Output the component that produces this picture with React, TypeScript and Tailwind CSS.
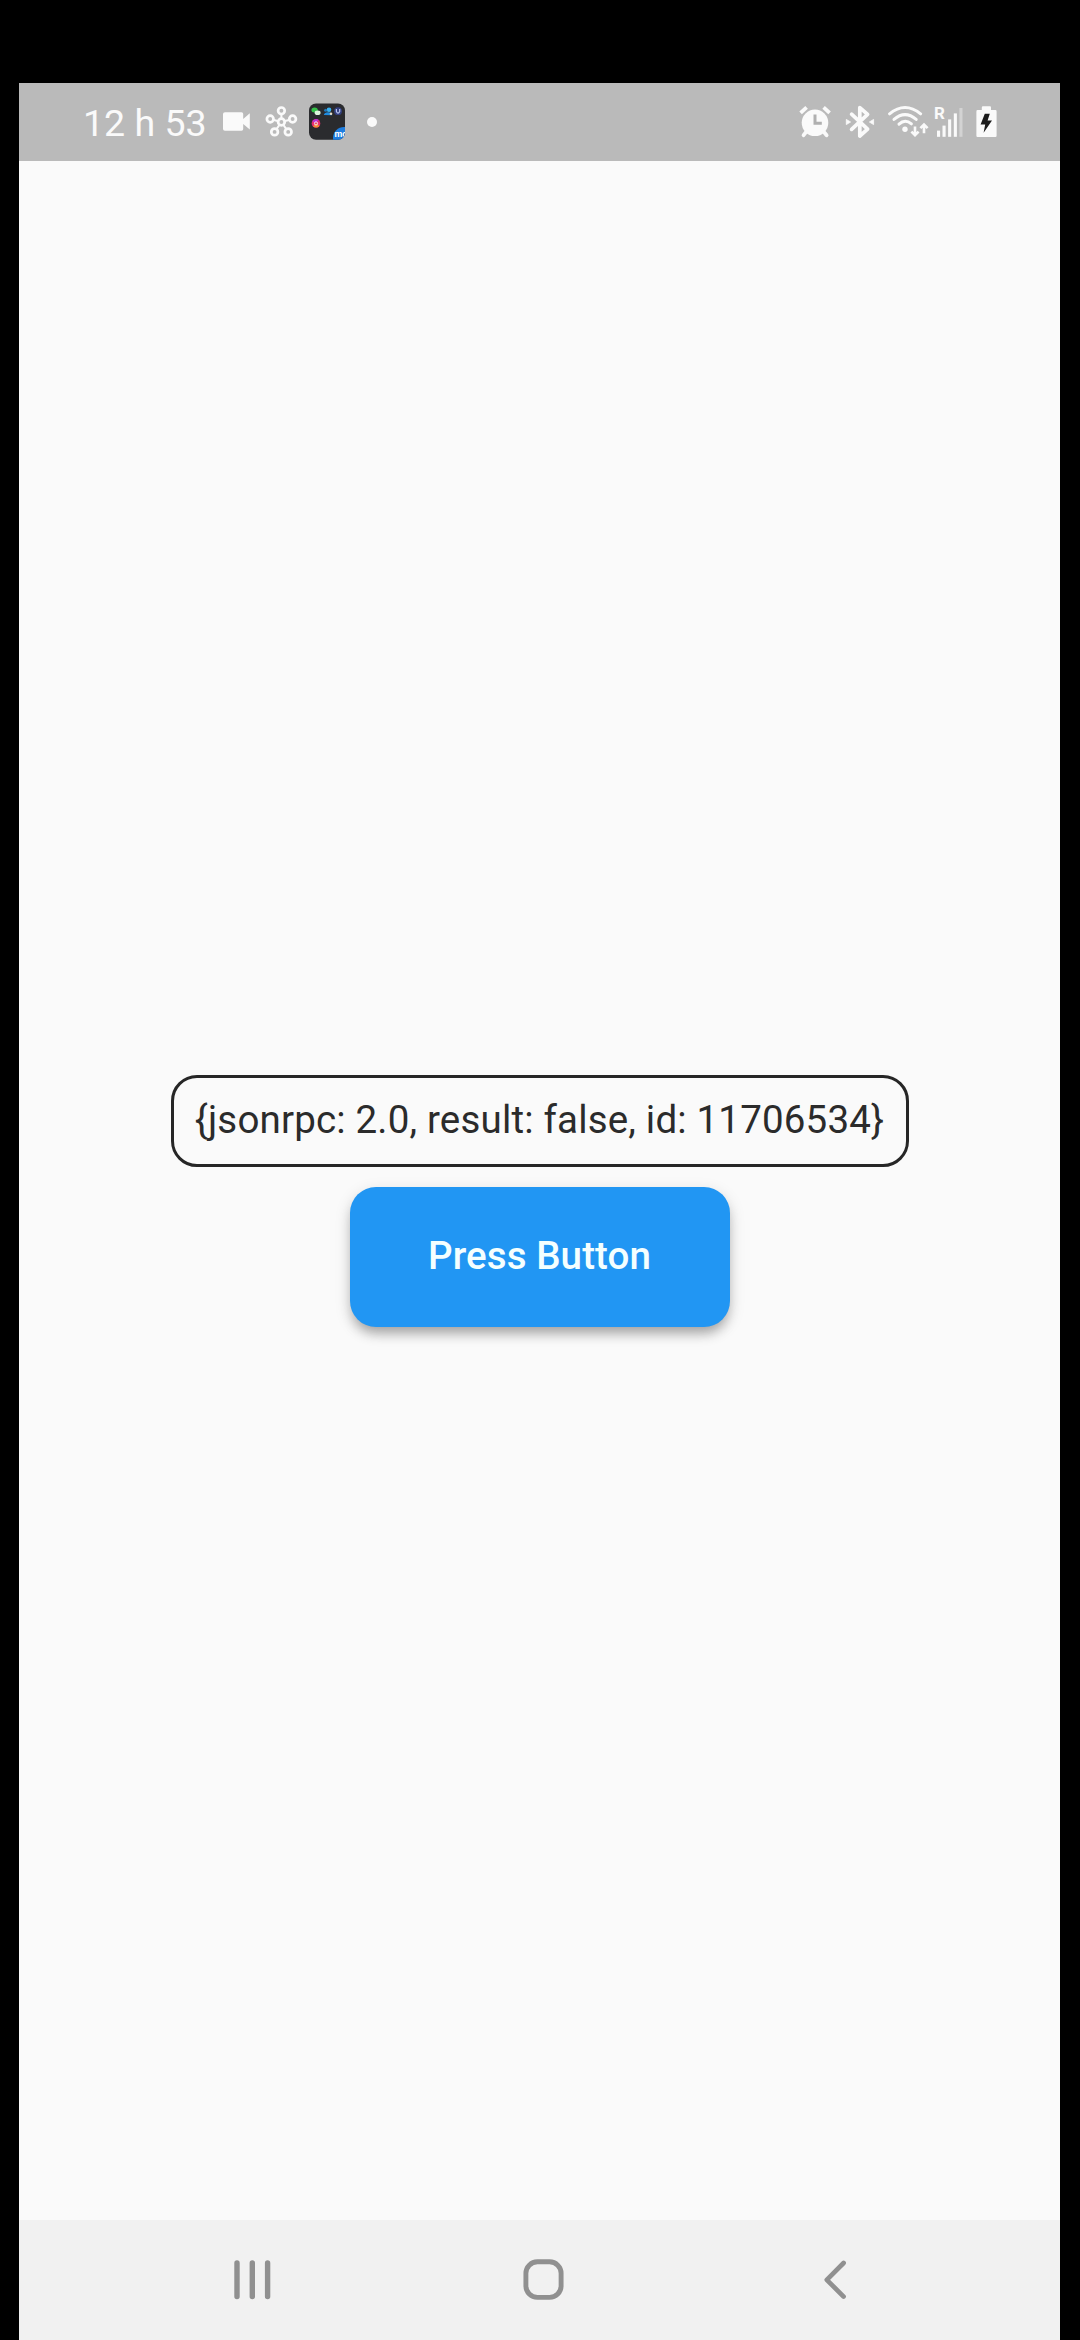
import React from "react";

type GlyphProps = {
  x: number;
  y: number;
  w: number;
  h: number;
  className?: string;
  children: React.ReactNode;
};

function Glyph({ x, y, w, h, className, children }: GlyphProps) {
  return (
    <svg width={w} height={h} viewBox={`${x} ${y} ${w} ${h}`} fill="none" className={className} aria-hidden="true">
      {children}
    </svg>
  );
}

const INK = "#fafafa";
const NAV = "#909090";

const hubNodes = [
  [282.4, 110.8],
  [293.6, 119],
  [289.2, 131.9],
  [275.6, 131.9],
  [271.2, 119],
];

function StatusLeft() {
  return (
    <div className="flex items-center">
      <Glyph x={223} y={103} w={29} h={38} className="ml-[18px]">
        <path d="M226 112.2H242.5Q244.2 112.2 244.2 114V119L250.8 113.3V129.6L244.2 124V129Q244.2 130.8 242.5 130.8H226Q224 130.8 224 129V114Q224 112.2 226 112.2Z" fill={INK} />
      </Glyph>
      <Glyph x={266} y={103} w={34} h={38} className="ml-[14px]">
        <g stroke={INK} strokeWidth="2.7">
          {hubNodes.map(([x, y]) => (
            <path key={`l${x}`} d={`M282.4 122L${x} ${y}`} strokeWidth="2" />
          ))}
          {hubNodes.map(([x, y]) => (
            <circle key={`c${x}`} cx={x} cy={y} r="3.3" fill="#bababa" />
          ))}
          <circle cx="282.4" cy="122" r="3.3" fill="#bababa" />
        </g>
      </Glyph>
      <Glyph x={309} y={102} w={38} h={40} className="ml-[9px]">
        <defs>
          <clipPath id="tile">
            <rect x="310" y="103.4" width="36" height="36.3" rx="7" />
          </clipPath>
        </defs>
        <g clipPath="url(#tile)">
          <rect x="310" y="103" width="36" height="37" fill="#2a2b2e" />
          <ellipse cx="315.6" cy="110" rx="3.2" ry="2.5" fill="#35c24a" />
          <ellipse cx="318.6" cy="112.8" rx="3" ry="2.3" fill="#dcf5dc" />
          <circle cx="330" cy="109.8" r="2.3" fill="#37b0f0" />
          <circle cx="326.6" cy="110.2" r="1.5" fill="#2378b8" />
          <path d="M324.8 115Q325.5 112.2 329 112.2Q333 112.2 333.2 115.2Z" fill="#1e8be0" />
          <circle cx="332" cy="113.8" r="1.3" fill="#eadfc8" />
          <circle cx="339" cy="111.2" r="3.9" fill="#34407f" />
          <path d="M337.4 109V111.4Q339 114.8 340.7 111.4V109" stroke="#b8c4f0" strokeWidth="1.2" />
          <circle cx="317" cy="123.4" r="4.3" fill="#e62b70" />
          <path d="M314 126.2A4.3 4.3 0 0 0 320.5 126L317 123Z" fill="#f58b35" />
          <path d="M313.4 121.4A4.3 4.3 0 0 1 319.5 119.8L317 123Z" fill="#b832d6" />
          <circle cx="317" cy="123.4" r="1.6" stroke="#fbe3ee" strokeWidth="1" />
          <circle cx="345" cy="138" r="11" fill="#1d7de0" />
          <text x="335.4" y="137" fontFamily="Roboto, sans-serif" fontSize="9" fontWeight="700" fill="#fff">
            mc
          </text>
        </g>
      </Glyph>
      <span className="ml-[21px] size-[10px] rounded-full bg-[#fafafa]" />
    </div>
  );
}

function StatusRight() {
  return (
    <div className="flex items-center">
      <Glyph x={798} y={103} w={34} h={38}>
        <circle cx="815" cy="122.8" r="13.3" fill={INK} />
        <path d="M815 114.5V123.3H821.8" stroke="#b0b0b0" strokeWidth="3" />
        <path d="M800.6 112.8L806.6 107.4M829.6 112.8L823.6 107.4" stroke={INK} strokeWidth="3.8" />
        <path d="M806.5 131.5L803.6 135.2M823.5 131.5L826.6 135.2" stroke={INK} strokeWidth="3.8" strokeLinecap="round" />
      </Glyph>
      <Glyph x={844} y={103} w={32} h={38} className="ml-[12px]">
        <path d="M851.6 114.2L867.6 129.2L859.8 136V107.6L867.6 114.4L851.6 129.4" stroke={INK} strokeWidth="3.7" strokeLinejoin="round" strokeLinecap="round" />
        <path d="M846.3 119.4L850.6 122L846.3 124.6ZM873.6 119.4L869.4 122L873.6 124.6Z" fill={INK} stroke={INK} strokeWidth="0.8" strokeLinejoin="round" />
      </Glyph>
      <Glyph x={886} y={103} w={44} h={38} className="ml-[10px]">
        <g stroke={INK} strokeWidth="3" strokeLinecap="round">
          <path d="M889.6 113.8Q905 101.2 920.6 113.8" />
          <path d="M894 119.4Q905 109.8 916.2 119.4" />
          <path d="M899 124.2Q905 118.4 911.4 123.8" />
        </g>
        <circle cx="905" cy="129.2" r="2.7" fill={INK} />
        <g stroke={INK} strokeWidth="2.6">
          <path d="M915 126.6V135M911.4 131.6L915 135.2L918.6 131.6" />
          <path d="M924 133.2V124.8M920.4 128.2L924 124.6L927.6 128.2" />
        </g>
      </Glyph>
      <Glyph x={933} y={103} w={32} h={38} className="ml-[3px]">
        <text x="933.9" y="119" fontFamily="Roboto, sans-serif" fontSize="17" fontWeight="700" fill={INK}>
          R
        </text>
        <g fill={INK}>
          <rect x="937" y="130.6" width="3.1" height="6.2" />
          <rect x="942.5" y="125.6" width="3.1" height="11.2" />
          <rect x="948.1" y="119.4" width="3.1" height="17.4" />
          <rect x="953.8" y="113.4" width="3.1" height="23.4" />
          <rect x="959.4" y="108" width="3.1" height="28.8" opacity="0.4" />
        </g>
      </Glyph>
      <Glyph x={975} y={103} w={23} h={38} className="ml-[10px]">
        <path d="M981.8 110V107.4Q981.8 106.2 983 106.2H990Q991 106.2 991 107.4V110H995.4Q996.6 110 996.6 111.4V135.8Q996.6 137.1 995.4 137.1H977.6Q976.4 137.1 976.4 135.8V111.4Q976.4 110 977.6 110Z" fill={INK} />
        <path d="M984.8 113.8H989.8L987.6 120.6H992L983.6 132.8L985.2 124.4H980.6Z" fill="#1c1c1c" />
      </Glyph>
    </div>
  );
}

export default function App() {
  return (
    <div className="flex h-[2340px] w-[1080px] flex-col overflow-hidden bg-black pt-[83px] pr-5 pl-[19px] font-['Roboto',sans-serif]">
      <header className="flex h-[78px] shrink-0 items-center justify-between bg-[#bababa] pr-[62px] pl-[64px]">
        <div className="flex items-center">
          <span className="w-[121px] pt-[3px] text-[37.5px] leading-none whitespace-nowrap text-[#fafafa]">12 h 53</span>
          <StatusLeft />
        </div>
        <StatusRight />
      </header>

      <main className="flex flex-1 flex-col items-center bg-[#fafafa] pt-[914px]">
        <div className="flex h-[92px] w-[738px] items-center justify-center rounded-[26px] border-[3px] border-[#262626] pb-px text-[38.5px] leading-none tracking-[0.18px] whitespace-nowrap text-[#2b2b2b]">
          {"{jsonrpc: 2.0, result: false, id: 11706534}"}
        </div>
        <button className="mt-5 h-[140px] w-[380px] rounded-[26px] bg-[#2196f3] pb-px text-[38.5px] leading-none font-medium tracking-[0.1px] whitespace-nowrap text-[#f4ffff] shadow-[0_9px_12px_-3px_rgba(0,0,0,0.26),0_5px_16px_rgba(0,0,0,0.15)]">
          Press Button
        </button>
      </main>

      <nav className="flex h-[120px] shrink-0 items-center bg-[#f1f1f1] pl-[214px]">
        <Glyph x={233} y={2258} w={39} h={44}>
          <path d="M237 2263V2296.6M252.3 2263V2296.6M267.6 2263V2296.6" stroke={NAV} strokeWidth="5.4" strokeLinecap="round" />
        </Glyph>
        <Glyph x={522} y={2258} w={43} h={44} className="ml-[250px]">
          <rect x="525.9" y="2261.8" width="35.2" height="35.6" rx="11.5" stroke={NAV} strokeWidth="4.9" />
        </Glyph>
        <Glyph x={822} y={2258} w={27} h={44} className="ml-[257px]">
          <path d="M843.6 2263L826.8 2279.8L843.6 2296.6" stroke={NAV} strokeWidth="4.7" strokeLinecap="round" strokeLinejoin="round" />
        </Glyph>
      </nav>
    </div>
  );
}
